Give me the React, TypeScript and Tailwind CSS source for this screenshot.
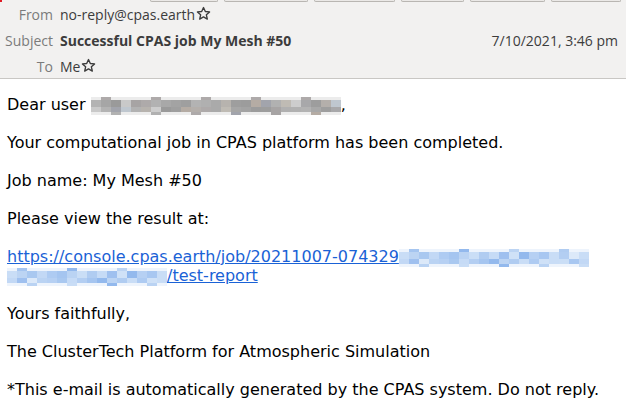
import React from 'react';

const toolbarButtons = ['w-[68px]', 'w-[84px]', 'w-[81px]', 'w-[63px]', 'w-[75px]', 'w-[70px]'];

const greyMosaic = [
  'bg-[#b3b3b3]', 'bg-[#a6a6a6]', 'bg-[#9a9a9a]', 'bg-[#c9c9c9]', 'bg-[#a7a4a4]', 'bg-[#aeaaaa]',
  'bg-[#b2b2b2]', 'bg-[#a8a8a8]', 'bg-[#a3a3a3]', 'bg-[#9f9f9f]', 'bg-[#b3b3b3]', 'bg-[#b0b0b0]',
  'bg-[#aaaaaa]', 'bg-[#b7b3ae]', 'bg-[#9e9e9e]', 'bg-[#9c9c9c]', 'bg-[#b5aca4]', 'bg-[#a2a4ac]',
  'bg-[#b1b1b1]', 'bg-[#bfbbb4]', 'bg-[#cdcdcd]', 'bg-[#a8a8aa]', 'bg-[#9d9d9d]', 'bg-[#b4afab]',
  'bg-[#bfc7cf]',
];

const blueMosaic = [
  'bg-[#c9ddf6]', 'bg-[#bcd4f3]', 'bg-[#a9c8f0]', 'bg-[#c2d8f5]', 'bg-[#aecbf2]', 'bg-[#a5c5f0]',
  'bg-[#bad3f3]', 'bg-[#cadef6]', 'bg-[#b0ccf1]', 'bg-[#c6dbf6]', 'bg-[#9fc0ef]', 'bg-[#cfe1f7]',
  'bg-[#93b9ed]', 'bg-[#b6d0f3]', 'bg-[#a8c7f1]', 'bg-[#c9ddf6]', 'bg-[#b3cef2]', 'bg-[#dce9f9]',
];

const Star = () => (
  <svg className="w-[15px] h-[15px] ml-[1px] mb-[1px]" viewBox="0 0 24 24" fill="none" stroke="#3c3c3c" strokeWidth={2.2} strokeLinejoin="round">
    <path d="M12 2.5l2.9 6.3 6.8.7-5.1 4.6 1.5 6.8L12 17.4l-6.1 3.5 1.5-6.8-5.1-4.6 6.8-.7z" />
  </svg>
);

// pixelated blur of hidden text
const Mosaic = ({ cells, palette, light }: { cells: number; palette: string[]; light: string }) => (
  <span className="inline-flex flex-col align-middle -my-[2px]">
    <span className="flex">
      {Array.from({ length: cells }).map((_, i) => (
        <span key={i} className={`w-[10px] h-[3px] ${i % 5 === 1 ? palette[(i * 5) % palette.length] : light}`} />
      ))}
    </span>
    <span className="flex">
      {Array.from({ length: cells }).map((_, i) => (
        <span key={i} className={`w-[10px] h-[7px] ${palette[i % palette.length]}`} />
      ))}
    </span>
    <span className="flex">
      {Array.from({ length: cells }).map((_, i) => (
        <span key={i} className={`w-[10px] h-[5px] ${palette[(i * 7 + 3) % palette.length]}`} />
      ))}
    </span>
    <span className="flex">
      {Array.from({ length: cells }).map((_, i) => (
        <span key={i} className={`w-[10px] h-[3px] ${i % 4 === 2 ? palette[(i * 3) % palette.length] : light}`} />
      ))}
    </span>
  </span>
);

const HeaderRow = ({ label, children }: { label: string; children: React.ReactNode }) => (
  <div className="flex items-center h-[26px]">
    <div className="w-[53px] text-right text-[#7b7b7b] pr-[7px] box-content">{label}</div>
    <div className="flex items-center text-[#3c3c3c]">{children}</div>
  </div>
);

export default function App() {
  return (
    <div className="w-[626px] h-[418px] bg-white overflow-hidden">
      <div className="relative h-[79px] bg-[#f2f1f0] border-b border-[#c9c7c4] font-['Open_Sans',sans-serif] text-[14px]">
        <div className="absolute left-0 top-0 w-[2px] h-[2px] bg-[#e01b24]" />
        <div className="flex gap-[6px] pl-[150px] h-[2px]">
          {toolbarButtons.map((w, i) => (
            <div key={i} className={`${w} h-[2px] border-b border-x border-[#b9b6b2] rounded-b-[2px] bg-[#ebe9e7]`} />
          ))}
        </div>
        <div className="flex flex-col -mt-[1px]">
          <HeaderRow label="From">
            no-reply@cpas.earth
            <Star />
          </HeaderRow>
          <div className="flex items-center">
            <HeaderRow label="Subject">
              <span className="font-bold">Successful CPAS job My Mesh #50</span>
            </HeaderRow>
            <div className="ml-auto pr-[8px] text-[#3c3c3c]">7/10/2021, 3:46 pm</div>
          </div>
          <HeaderRow label="To">
            Me
            <Star />
          </HeaderRow>
        </div>
      </div>

      <div className="px-[7px] pt-[16px] flex flex-col gap-[19px] font-['DejaVu_Sans',sans-serif] text-[16px] leading-[19px] text-black">
        <p>
          Dear user <Mosaic cells={25} palette={greyMosaic} light="bg-[#ececec]" />,
        </p>
        <p>Your computational job in CPAS platform has been completed.</p>
        <p>Job name: My Mesh #50</p>
        <p>Please view the result at:</p>
        <p className="text-[#1a62d6]">
          <a href="#" className="underline">https://console.cpas.earth/job/20211007-074329</a>
          <Mosaic cells={19} palette={blueMosaic} light="bg-[#eef4fc]" />
          <br />
          <Mosaic cells={16} palette={blueMosaic} light="bg-[#eef4fc]" />
          <a href="#" className="underline">/test-report</a>
        </p>
        <p>Yours faithfully,</p>
        <p>The ClusterTech Platform for Atmospheric Simulation</p>
        <p>*This e-mail is automatically generated by the CPAS system. Do not reply.</p>
      </div>
    </div>
  );
}
